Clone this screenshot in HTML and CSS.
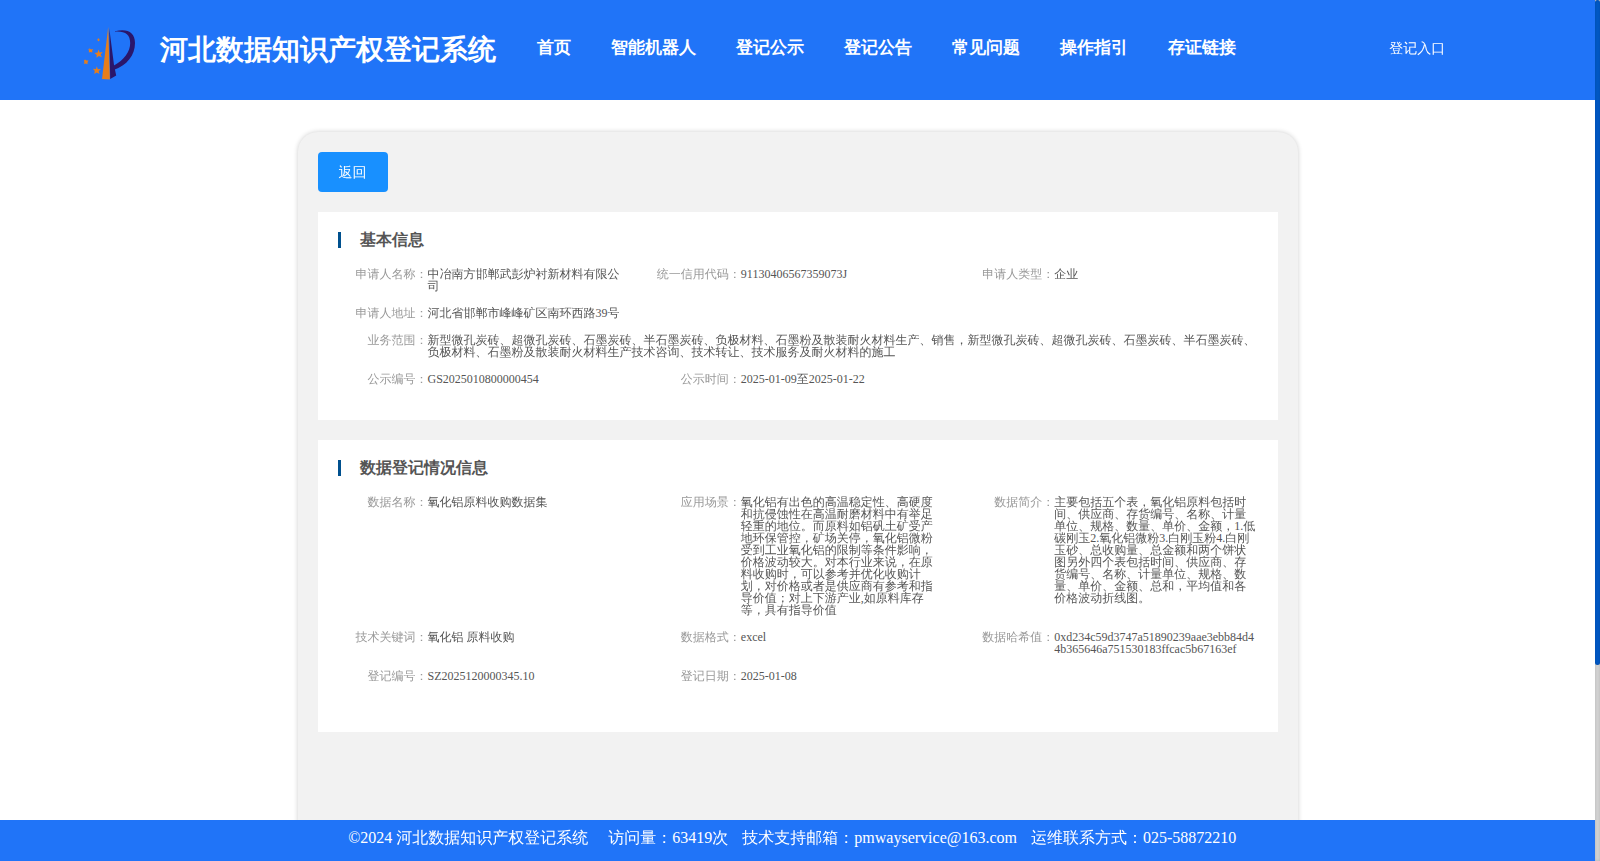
FILE: index.html
```html
<!DOCTYPE html>
<html>
<head>
<meta charset="utf-8">
<title>河北数据知识产权登记系统</title>
<link rel="stylesheet" href="styles.css">
</head>
<body>
<div class="window">
<div class="page">
  <header class="header">
    <svg class="logo" viewBox="0 0 54 54" width="54" height="54">
      <path class="orange" d="M24.2 1 L25.9 53.5 L18 53 Z"/>
      <path class="navy" d="M25.3 2.5 L30 39 L32.2 49.5 L26.2 53 Z"/>
      <path class="navy" d="M31 5.2 C43 2 51 6 51 17 C51 29 43 39.5 29.6 44 L30 39.5 C40 34 46.2 26 46.2 17 C46.2 8.500 41 5 31 5.700 Z"/>
      <g class="orange">
        <path d="M14.500 23.500 L15.600 26.500 L18.700 26.100 L16.700 28.500 L17.900 31.300 L14.900 30 L12.400 31.800 L12.800 28.900 L10.500 27 L13.600 26.500 Z"/>
        <path d="M12.800 40.200 L13.800 43.200 L17 43.100 L14.600 45.200 L15.500 48.100 L12.800 46.600 L10.200 48 L10.800 45.100 L8.900 42.800 L11.900 43 Z"/>
        <path d="M5.500 22 L7 23.400 L9.200 23.100 L8.100 24.800 L8.400 26.500 L6.500 25.900 L4.700 26.600 L5.100 24.700 L4 23.200 L5.500 23.400 Z"/>
        <path d="M1 33.500 L2.500 34.500 L4.500 34.500 L3.500 36.300 L3.500 38.200 L1.700 37.500 L0 38 L.4 36.200 L0 34.600 Z"/>
        <path d="M14 12.200 L15.500 13 L15.300 15 L14 15.300 L13.400 13.800 Z"/>
      </g>
    </svg>
    <h1 class="brand">河北数据知识产权登记系统</h1>
    <nav class="nav">
      <a>首页</a><a>智能机器人</a><a>登记公示</a><a>登记公告</a><a>常见问题</a><a>操作指引</a><a>存证链接</a>
    </nav>
    <a class="entry">登记入口</a>
  </header>
  <main class="main">
    <div class="card">
      <button class="back">返回</button>
      <section class="panel">
        <h2 class="title">基本信息</h2>
        <div class="row">
          <div class="item"><span class="label">申请人名称：</span><span class="value">中冶南方邯郸武彭炉衬新材料有限公司</span></div>
          <div class="item"><span class="label">统一信用代码：</span><span class="value">91130406567359073J</span></div>
          <div class="item"><span class="label">申请人类型：</span><span class="value">企业</span></div>
        </div>
        <div class="row">
          <div class="item"><span class="label">申请人地址：</span><span class="value">河北省邯郸市峰峰矿区南环西路39号</span></div>
        </div>
        <div class="row">
          <div class="item wide"><span class="label">业务范围：</span><span class="value">新型微孔炭砖、超微孔炭砖、石墨炭砖、半石墨炭砖、负极材料、石墨粉及散装耐火材料生产、销售，新型微孔炭砖、超微孔炭砖、石墨炭砖、半石墨炭砖、负极材料、石墨粉及散装耐火材料生产技术咨询、技术转让、技术服务及耐火材料的施工</span></div>
        </div>
        <div class="row">
          <div class="item"><span class="label">公示编号：</span><span class="value">GS2025010800000454</span></div>
          <div class="item"><span class="label">公示时间：</span><span class="value">2025-01-09至2025-01-22</span></div>
        </div>
      </section>
      <section class="panel">
        <h2 class="title">数据登记情况信息</h2>
        <div class="row">
          <div class="item"><span class="label">数据名称：</span><span class="value">氧化铝原料收购数据集</span></div>
          <div class="item"><span class="label">应用场景：</span><span class="value">氧化铝有出色的高温稳定性、高硬度和抗侵蚀性在高温耐磨材料中有举足轻重的地位。而原料如铝矾土矿受产地环保管控，矿场关停，氧化铝微粉受到工业氧化铝的限制等条件影响，价格波动较大。对本行业来说，在原料收购时，可以参考并优化收购计划，对价格或者是供应商有参考和指导价值；对上下游产业,如原料库存等，具有指导价值</span></div>
          <div class="item"><span class="label">数据简介：</span><span class="value">主要包括五个表，氧化铝原料包括时间、供应商、存货编号、名称、计量单位、规格、数量、单价、金额，1.低碳刚玉2.氧化铝微粉3.白刚玉粉4.白刚玉砂、总收购量、总金额和两个饼状图另外四个表包括时间、供应商、存货编号、名称、计量单位、规格、数量、单价、金额、总和，平均值和各价格波动折线图。</span></div>
        </div>
        <div class="row">
          <div class="item"><span class="label">技术关键词：</span><span class="value">氧化铝 原料收购</span></div>
          <div class="item"><span class="label">数据格式：</span><span class="value">excel</span></div>
          <div class="item"><span class="label">数据哈希值：</span><span class="value">0xd234c59d3747a51890239aae3ebb84d44b365646a751530183ffcac5b67163ef</span></div>
        </div>
        <div class="row">
          <div class="item"><span class="label">登记编号：</span><span class="value">SZ2025120000345.10</span></div>
          <div class="item"><span class="label">登记日期：</span><span class="value">2025-01-08</span></div>
        </div>
        <div class="row"></div>
      </section>
    </div>
  </main>
  <footer class="footer">
    <span class="copyright">©2024 河北数据知识产权登记系统</span><span class="visits">访问量：63419次</span><span class="mail">技术支持邮箱：pmwayservice@163.com</span><span>运维联系方式：025-58872210</span>
  </footer>
</div>
<div class="scrollbar"><div class="thumb"></div></div>
</div>
</body>
</html>
```
FILE: styles.css
```css
* { box-sizing: border-box; margin: 0; padding: 0; }
body {
  font-family: "Liberation Serif", "WenQuanYi Zen Hei", "Noto Sans CJK SC", serif;
  background: #fff;
  overflow: hidden;
}
.window { display: flex; height: 861px; }
.page { flex: 1; display: flex; flex-direction: column; height: 861px; }
.header {
  flex: none;
  display: flex;
  height: 100px;
  padding-left: 84px;
  background: #2074f8;
  color: #fff;
}
.logo { flex: none; margin-top: 26px; }
.orange { fill: #e67e1c; }
.navy { fill: #2a166b; }
.brand, .nav, .title { font-family: "Liberation Serif", serif; }
.brand {
  width: 360px;
  margin-left: 21.5px;
  font-size: 28px;
  line-height: 100px;
  white-space: nowrap;
}
.nav {
  display: flex;
  gap: 40px;
  width: 852.5px;
  margin-left: 17.3px;
  font-size: 17px;
  font-weight: bold;
  line-height: 96px;
  white-space: nowrap;
}
.entry { font-size: 14px; line-height: 97px; }
.main { flex: 1; min-height: 0; padding-top: 32px; overflow: hidden; }
.card {
  width: 1000px;
  height: 800px;
  margin: 0 auto;
  padding: 20px;
  border-radius: 20px;
  background: #f2f2f2;
  box-shadow: 0 0 5px rgba(0, 0, 0, .2);
}
.back {
  display: block;
  width: 70px;
  height: 40px;
  padding-top: 1px;
  border: 0;
  border-radius: 4px;
  background: #1890ff;
  color: #fff;
  font: inherit;
  font-size: 14px;
}
.panel { margin-top: 20px; padding: 20px 0 20px 20px; background: #fff; }
.title {
  margin-bottom: 20px;
  padding-left: 19.5px;
  border-left: 3px solid #00508e;
  color: #555;
  font-size: 16px;
  line-height: 16px;
}
.row {
  display: grid;
  grid-template-columns: repeat(3, 1fr);
  padding-bottom: 15px;
  font-size: 12px;
  line-height: 12px;
}
.item { display: flex; padding-right: 20px; }
.wide { grid-column: 1 / -1; }
.label { flex: none; width: 90px; color: #999; text-align: right; }
.value { flex: 1; min-width: 0; color: #555; overflow-wrap: anywhere; }
.footer {
  flex: none;
  height: 41px;
  padding-left: 348.2px;
  background: #2074f8;
  color: #fff;
  font-size: 16px;
  line-height: 35px;
  white-space: nowrap;
}
.copyright { margin-right: 20px; }
.visits, .mail { margin-right: 14px; }
.scrollbar { flex: none; width: 5px; background: #d3d3d3; box-shadow: inset 0 0 3px rgba(0, 0, 0, .15); }
.thumb { height: 665px; border-radius: 3px; background: #0058c4; box-shadow: inset 0 0 3px rgba(0, 0, 0, .15); }
```
